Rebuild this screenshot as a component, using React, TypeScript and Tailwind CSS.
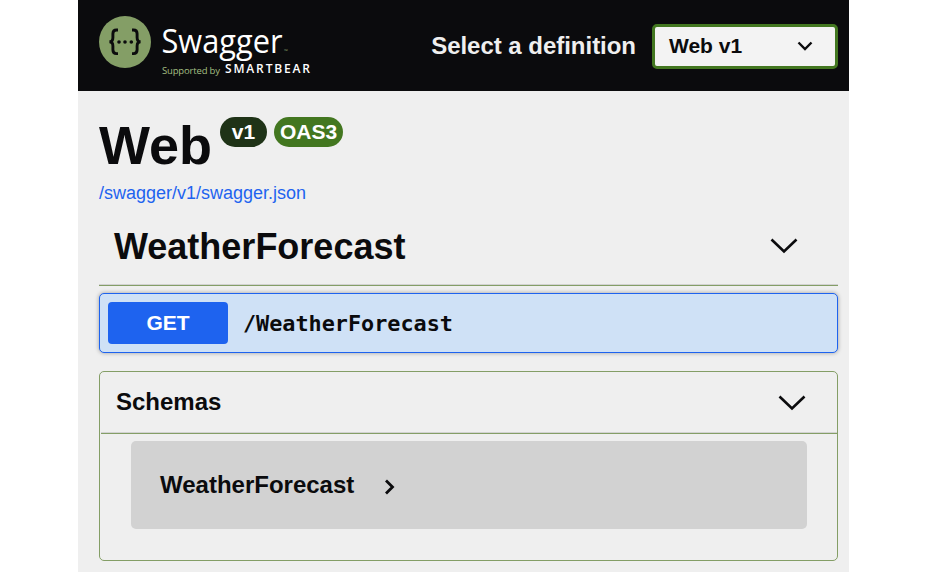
import React from "react";

function Logo() {
  return (
    <svg width="220" height="91" viewBox="99 0 220 91" className="shrink-0" role="img" aria-label="Swagger">
      <circle cx="125" cy="42" r="26" fill="#849e66" />
      <g fill="none" stroke="#0b0b0d" strokeWidth="2.9">
        <path d="M118 30h-1.500c-2.800 0-3.600 1.300-3.600 3.800v3.700c0 2.800-.9 4.300-3.500 4.300 2.600 0 3.500 1.600 3.500 4.300v3.700c0 2.500.8 3.800 3.600 3.800h1.500" />
        <path d="M132 30h1.500c2.800 0 3.600 1.300 3.600 3.800v3.700c0 2.800.9 4.300 3.500 4.300-2.600 0-3.500 1.600-3.500 4.300v3.700c0 2.500-.8 3.800-3.600 3.800h-1.500" />
      </g>
      <g fill="#0b0b0d">
        <circle cx="119" cy="42" r="1.800" />
        <circle cx="125" cy="42" r="1.800" />
        <circle cx="131.300" cy="42" r="1.800" />
      </g>
      <text x="161.500" y="52.500" fill="#fff" fontSize="33" fontWeight="400" textLength="121" lengthAdjust="spacingAndGlyphs" fontFamily="'Open Sans', sans-serif">Swagger</text>
      <text x="284" y="53" fill="#849e66" fontSize="5" fontWeight="400" fontFamily="'Open Sans', sans-serif">™</text>
      <text x="162" y="73.500" fill="#a3bf82" fontSize="9.500" fontWeight="400" textLength="58" fontFamily="'Open Sans', sans-serif">Supported by</text>
      <text x="225" y="73.300" fill="#fff" fontSize="12" fontWeight="600" textLength="85" fontFamily="'Open Sans', sans-serif">SMARTBEAR</text>
    </svg>
  );
}

function Chevron({ className }: { className: string }) {
  return (
    <svg width="28" height="18" viewBox="0 0 28 18" className={className} fill="none" stroke="#0b0b0d" strokeWidth="2.6">
      <path d="M1.500 2.500 14 14.500 26.500 2.500" />
    </svg>
  );
}

export default function App() {
  return (
    <div className="h-[572px] w-[928px] overflow-hidden bg-white font-['Liberation_Sans',Arial,sans-serif] font-bold whitespace-nowrap text-[#0b0b0d]">
      <div className="ml-[78px] flex h-full w-[771px] flex-col bg-[#efefef]">
        <header className="flex h-[91px] shrink-0 items-center justify-between bg-[#0b0b0d] pr-[11px] pl-[21px]">
          <Logo />
          <div className="flex items-center gap-4">
            <label className="text-2xl tracking-[-0.03px] text-[#efefef]">Select a definition</label>
            <button className="mt-0.5 flex h-[45px] w-[186px] items-center justify-between rounded-[5px] border-3 border-[#437720] bg-[#f3f3f3] pr-[22px] pb-0.5 pl-[14px] text-[21px]">
              <span>Web v1</span>
              <svg width="16" height="11" viewBox="0 0 16 11" className="mt-0.5" fill="none" stroke="#0b0b0d" strokeWidth="2.400">
                <path d="m1.500 1.500 6.500 6.500 6.500-6.500" />
              </svg>
            </button>
          </div>
        </header>

        <main className="flex flex-col pr-[11px] pl-[21px]">
          <div className="flex h-[82px] items-start pt-[26px]">
            <h1 className="mt-px text-[54px] leading-[54px]">Web</h1>
            <span className="ml-2 flex h-[30px] w-[47px] items-center justify-center rounded-full bg-[#1f3317] text-[21px] text-white">v1</span>
            <span className="ml-[7px] flex h-[30px] w-[69px] items-center justify-center rounded-full bg-[#437720] text-[21px] text-white">OAS3</span>
          </div>
          <a className="mt-[9px] h-[22px] text-lg leading-[22px] font-normal text-[#1e63ef]">/swagger/v1/swagger.json</a>

          <section>
            <div className="flex h-[82px] w-[739px] items-center justify-between border-b border-[#849e66] pr-10 pl-[15px] shadow-[inset_0_-1px_0_#d2d2d2]">
              <h2 className="pt-1 text-4xl">WeatherForecast</h2>
              <Chevron className="mt-0.5" />
            </div>
            <div className="mt-[7px] flex h-[60px] w-[739px] items-center rounded-[5px] border border-[#1e63ef] bg-[#cfe1f6] pl-2 shadow-[0_0_4px_rgba(0,0,0,0.35)]">
              <span className="flex h-[42px] w-[120px] items-center justify-center rounded-[4px] bg-[#1e63ef] text-[21px] text-white">GET</span>
              <span className="mt-[3px] ml-[15px] font-['DejaVu_Sans_Mono',monospace] text-[21.8px]">/WeatherForecast</span>
            </div>
          </section>

          <section className="mt-[18px] h-[190px] w-[739px] rounded-[5px] border border-[#849e66]">
            <div className="ml-px flex h-[62px] items-center justify-between border-b border-[#849e66] pr-[31px] pb-[2px] pl-[15px] shadow-[inset_0_-1px_0_#d2d2d2]">
              <h3 className="text-2xl">Schemas</h3>
              <Chevron className="mt-0.5" />
            </div>
            <div className="mt-[7px] ml-[31px] flex h-[88px] w-[676px] items-center rounded-[5px] bg-[#d2d2d2] pl-[29px]">
              <span className="text-2xl">WeatherForecast</span>
              <svg width="12" height="16" viewBox="0 0 12 16" className="mt-1 ml-[30px]" fill="none" stroke="#0b0b0d" strokeWidth="2.800">
                <path d="m2 1.500 6.500 6.500L2 14.500" />
              </svg>
            </div>
          </section>
        </main>
      </div>
    </div>
  );
}
